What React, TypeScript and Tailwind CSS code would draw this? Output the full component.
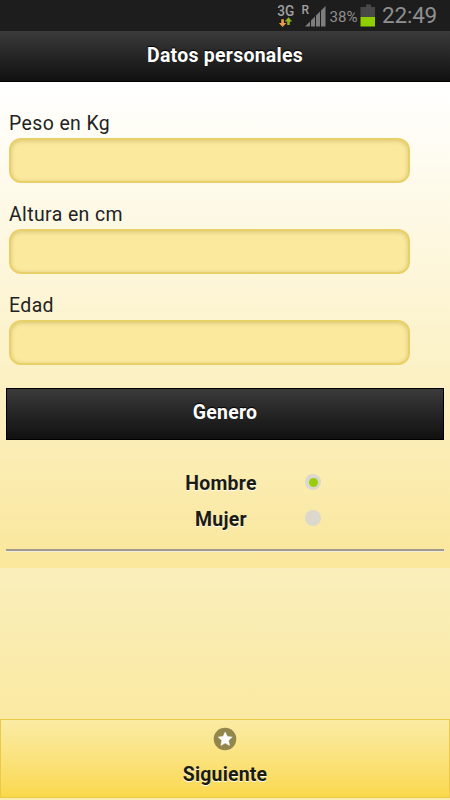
import React from "react";

function StatusBar() {
  return (
    <div className="flex h-[31px] items-start bg-[#1d1d1d] pl-[277px] text-[#8f8f8f]">
      <svg width="98" height="31" viewBox="0 0 98 31" className="shrink-0 font-[Roboto,sans-serif]">
        <text x="0.3" y="15.5" fontSize="14" fontWeight="500" textLength="17" lengthAdjust="spacingAndGlyphs" fill="#a0a0a0">3G</text>
        <path d="M4.300 19.300h2.600v3.700h2.400L5.600 27 1.900 23h2.400z" fill="#f09a45" />
        <path d="M10.200 25V21.500H7.800L11.500 17.300 15.200 21.500h-2.400V25z" fill="#8fb41c" />
        <text x="24.500" y="13.500" fontSize="12" fontWeight="500" fill="#a0a0a0">R</text>
        <path d="M28 26.500L33 21.500V26.500zM34 20.500l4-4v10h-4zM39 15.500l4-4v15h-4zM44 10.500l4.500-4.500v20.500h-4.500z" fill="#7d7d7d" />
        <text x="52.500" y="21.500" fontSize="15.500" textLength="28" lengthAdjust="spacingAndGlyphs" fill="#8f8f8f">38%</text>
        <path d="M89 4.500h5V7h4v10H83.500V7H89z" fill="#484848" />
        <path d="M83.500 17H98v9.500H83.500z" fill="#8fcf00" />
      </svg>
      <span className="ml-[7px] font-[Roboto,sans-serif] text-[22.500px] leading-[30px] tracking-[-0.2px]">22:49</span>
    </div>
  );
}

function Field({ label }: { label: string }) {
  return (
    <label className="block h-[91px] pl-[2px]">
      <span className="block h-[28px] pt-px text-[19.450px] font-normal leading-[27px] tracking-[0.4px] text-[#222]">{label}</span>
      <input
        type="text"
        className="mt-px block h-[45px] w-[401px] rounded-[12px] border-2 border-[#e8cf68] bg-[#fbe99d] px-2 shadow-[inset_0_1px_4px_rgba(110,90,0,0.25)] outline-none"
      />
    </label>
  );
}

function Option({ label, checked }: { label: string; checked?: boolean }) {
  return (
    <div className="flex h-[36px] items-center">
      <span className="ml-[165px] mt-[4px] w-[100px] text-center text-[19.450px] font-bold leading-6 tracking-[0.25px] text-[#1c1b12] [text-shadow:0_1px_0_#fff]">{label}</span>
      <span className="ml-[34px] flex size-4 items-center justify-center rounded-full bg-[#dcd8cd]">
        {checked && <span className="size-[9px] rounded-full bg-[#98ce0b]" />}
      </span>
    </div>
  );
}

export default function App() {
  return (
    <div className="flex h-[800px] w-[450px] flex-col overflow-hidden bg-[#fcecb0] font-[Roboto,sans-serif]">
      <StatusBar />
      <header className="flex h-[51px] shrink-0 justify-center border-b border-black bg-linear-to-b from-[#3b3b3b] to-[#111]">
        <h1 className="mt-[11px] text-[19.450px] font-bold leading-7 tracking-[0.27px] text-white [text-shadow:0_-1px_1px_#000]">Datos personales</h1>
      </header>
      <main className="h-[486px] shrink-0 bg-linear-to-b from-white to-[#fae79b] px-[7px] pt-[27px]">
        <Field label="Peso en Kg" />
        <Field label="Altura en cm" />
        <Field label="Edad" />
        <h2 className="mt-[6px] -mx-px flex h-[52px] justify-center border border-black bg-linear-to-b from-[#3b3b3b] to-[#111] pt-[10px] text-[19.450px] font-bold leading-7 tracking-[0.25px] text-white [text-shadow:0_-1px_1px_#000]">Genero</h2>
        <div className="-mx-px pt-[24px]">
          <Option label="Hombre" checked />
          <Option label="Mujer" />
        </div>
        <hr className="-mx-px mt-[13px] h-[3px] border-0 border-t-2 border-[#a09a90] bg-[#f1edd8]" />
      </main>
      <div className="h-[151px] shrink-0 bg-linear-to-b from-[#faefbc] to-[#fae9a1]" />
      <footer className="flex h-[79px] shrink-0 flex-col items-center border border-[#edc849] bg-linear-to-b from-[#fbeca4] to-[#fad84b] pt-[7px]">
        <svg width="24" height="24" viewBox="0 0 24 24">
          <circle cx="12" cy="12" r="11.300" fill="#93864c" />
          <path d="M12.200 5l2.100 4.500 4.900.6-3.600 3.400.9 4.900-4.300-2.400-4.300 2.400.9-4.900-3.600-3.400 4.900-.6z" fill="#fff" stroke="#fff" strokeWidth="0.500" />
        </svg>
        <span className="mt-[12px] text-[19.450px] font-bold leading-6 tracking-[0.200px] text-[#1c1b12] [text-shadow:0_1px_0_#fff]">Siguiente</span>
      </footer>
    </div>
  );
}
